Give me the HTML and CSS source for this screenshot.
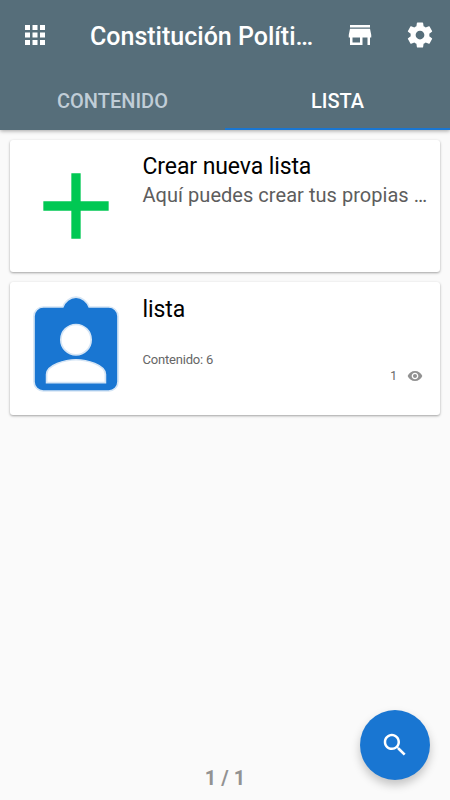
FILE: index.html
```html
<!DOCTYPE html>
<html lang="es">
<head>
<meta charset="utf-8">
<title>Constitución Política</title>
<link rel="stylesheet" href="styles.css">
</head>
<body>
<div class="app">
  <header class="header">
    <div class="toolbar">
      <svg class="icon" viewBox="0 0 24 24"><path d="M4 8h4V4H4v4zm6 12h4v-4h-4v4zm-6 0h4v-4H4v4zm0-6h4v-4H4v4zm6 0h4v-4h-4v4zm6-10v4h4V4h-4zm-6 4h4V4h-4v4zm6 6h4v-4h-4v4zm0 6h4v-4h-4v4z"/></svg>
      <h1 class="title">Constitución Políti…</h1>
      <svg class="icon store" viewBox="0 0 24 24"><path d="M20 4H4v2h16V4zm1 10v-2l-1-5H4l-1 5v2h1v6h10v-6h4v6h2v-6h1zm-9 4H6v-4h6v4z"/></svg>
      <svg class="icon" viewBox="0 0 24 24"><path d="M19.43 12.98c.04-.32.07-.64.07-.98s-.03-.66-.07-.98l2.11-1.65c.19-.15.24-.42.12-.64l-2-3.46c-.12-.22-.39-.3-.61-.22l-2.49 1c-.52-.4-1.08-.73-1.69-.98l-.38-2.65C14.46 2.18 14.25 2 14 2h-4c-.25 0-.46.18-.49.42l-.38 2.65c-.61.25-1.17.59-1.69.98l-2.49-1c-.23-.09-.49 0-.61.22l-2 3.46c-.13.22-.07.49.12.64l2.11 1.65c-.04.32-.07.65-.07.98s.03.66.07.98l-2.11 1.65c-.19.15-.24.42-.12.64l2 3.46c.12.22.39.3.61.22l2.49-1c.52.4 1.08.73 1.69.98l.38 2.65c.03.24.24.42.49.42h4c.25 0 .46-.18.49-.42l.38-2.65c.61-.25 1.17-.59 1.69-.98l2.49 1c.23.09.49 0 .61-.22l2-3.46c.12-.22.07-.49-.12-.64l-2.11-1.65zM12 15.5c-1.93 0-3.5-1.57-3.5-3.5s1.57-3.5 3.5-3.5 3.5 1.57 3.5 3.5-1.57 3.5-3.5 3.5z"/></svg>
    </div>
    <nav class="tabs">
      <div class="tab">CONTENIDO</div>
      <div class="tab active">LISTA</div>
    </nav>
  </header>
  <main class="list">
    <article class="card">
      <svg class="thumb add" viewBox="0 0 24 24"><path d="M19 13h-6v6h-2v-6H5v-2h6V5h2v6h6v2z"/></svg>
      <div class="info">
        <h2 class="name">Crear nueva lista</h2>
        <p class="desc">Aquí puedes crear tus propias …</p>
      </div>
    </article>
    <article class="card">
      <svg class="thumb person" viewBox="0 0 24 24"><path d="M19 3h-4.180C14.400 1.840 13.300 .9 12 .9c-1.300 0-2.400.94-2.820 2.100H5c-1.100 0-2 .9-2 2v14c0 1.100.9 2 2 2h14c1.100 0 2-.9 2-2V5c0-1.100-.9-2-2-2zM12 6.750a3.250 3.250 0 0 1 0 6.500a3.250 3.250 0 0 1 0-6.500zM18.300 19.200H5.700v-1.800c0-2 4-3.100 6.300-3.100s6.300 1.100 6.300 3.100V19.200z"/></svg>
      <div class="info">
        <h2 class="name">lista</h2>
        <p class="count">Contenido: 6</p>
        <div class="views">
          <span>1</span>
          <svg class="eye" viewBox="0 0 24 24"><path d="M12 4.500C7 4.500 2.730 7.610 1 12c1.730 4.390 6 7.500 11 7.500s9.270-3.110 11-7.500c-1.730-4.390-6-7.500-11-7.500zM12 17c-2.760 0-5-2.240-5-5s2.240-5 5-5 5 2.240 5 5-2.240 5-5 5zm0-8c-1.660 0-3 1.340-3 3s1.340 3 3 3 3-1.340 3-3-1.340-3-3-3z"/></svg>
        </div>
      </div>
    </article>
  </main>
  <footer class="pager">1 / 1</footer>
  <button class="fab" aria-label="Buscar">
    <svg class="icon" viewBox="0 0 24 24"><path d="M15.500 14h-.79l-.28-.27C15.410 12.590 16 11.110 16 9.500 16 5.910 13.090 3 9.500 3S3 5.910 3 9.500 5.910 16 9.500 16c1.610 0 3.090-.59 4.230-1.570l.27.28v.79l5 4.990L20.490 19l-4.990-5zm-6 0C7.010 14 5 11.990 5 9.500S7.010 5 9.500 5 14 7.010 14 9.500 11.990 14 9.500 14z"/></svg>
  </button>
</div>
</body>
</html>
```

FILE: styles.css
```css
* { box-sizing: border-box; margin: 0; padding: 0; }

body {
  font-family: Roboto, "Liberation Sans", sans-serif;
  background: #fafafa;
}

.app {
  position: relative;
  display: flex;
  flex-direction: column;
  height: 800px;
  overflow: hidden;
}

.header {
  position: relative;
  z-index: 1;
  flex: none;
  height: 130px;
  background: #566e7a;
  color: #fff;
  box-shadow: 0 1px 4px rgba(0, 0, 0, .35);
}

.toolbar {
  display: flex;
  align-items: center;
  height: 70px;
  padding: 0 15px 0 20px;
}

.icon { flex: none; width: 30px; height: 30px; fill: #fff; }
.store { margin-right: 30px; }

.title {
  flex: 1;
  margin-left: 40px;
  padding-top: 3px;
  font-size: 25px;
  font-weight: 500;
  line-height: 30px;
  white-space: nowrap;
}

.tabs { display: flex; height: 60px; }

.tab {
  flex: 1;
  padding-top: 2px;
  text-align: center;
  font-size: 20px;
  font-weight: 500;
  line-height: 58px;
  color: #c0cdd7;
}

.tab.active { color: #fff; border-bottom: 2px solid #1976d2; }

.list {
  flex: 1;
  display: flex;
  flex-direction: column;
  gap: 10px;
  padding: 9.500px 10px 0;
}

.card {
  display: flex;
  align-items: center;
  height: 132.800px;
  padding-left: 10px;
  background: #fff;
  border-radius: 3px;
  box-shadow: 0 1px 2.500px rgba(0, 0, 0, .36);
}

.thumb { flex: none; width: 112px; height: 112px; }
.add { fill: #00c853; }
.person { fill: #1976d2; stroke: #d5e5f5; stroke-width: .36; }

.info {
  flex: 1;
  align-self: stretch;
  display: flex;
  flex-direction: column;
  padding: 12.400px 0 0 10.500px;
}

.name { font-size: 23px; font-weight: 400; line-height: 29px; letter-spacing: -.1px; color: #000; }
.desc { font-size: 20px; line-height: 29.500px; letter-spacing: .04px; color: #5d5d5d; white-space: nowrap; }
.count { margin-top: 28.500px; font-size: 13px; line-height: 16px; letter-spacing: -.2px; color: #666; }

.views {
  display: flex;
  justify-content: flex-end;
  align-items: center;
  gap: 10px;
  padding-right: 17px;
  font-size: 12px;
  line-height: 16px;
  color: #666;
}

.eye { width: 16px; height: 16px; fill: #929292; }

.pager {
  height: 44px;
  text-align: center;
  font-size: 20px;
  font-weight: 700;
  line-height: 44px;
  color: #929292;
}

.fab {
  position: absolute;
  right: 20px;
  bottom: 20px;
  display: flex;
  align-items: center;
  justify-content: center;
  width: 70px;
  height: 70px;
  border: 0;
  border-radius: 50%;
  background: #1976d2;
  box-shadow: 0 5px 10px rgba(0, 0, 0, .22);
}
```
